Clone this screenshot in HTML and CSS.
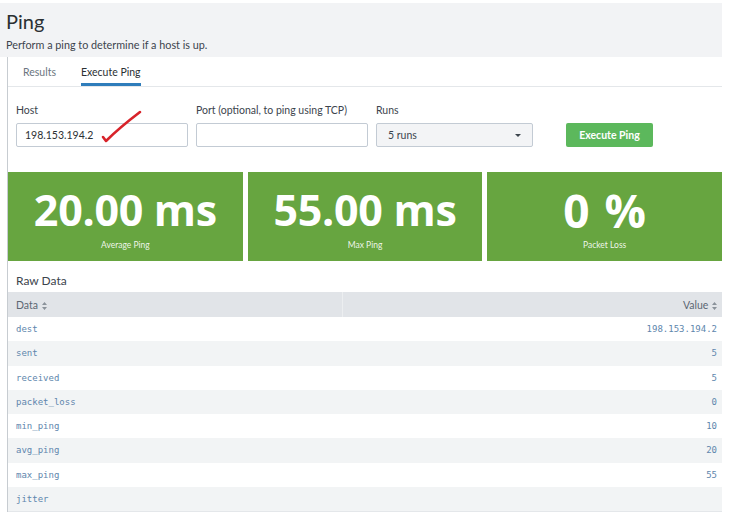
FILE: index.html
```html
<!DOCTYPE html>
<html>
<head>
<meta charset="utf-8">
<link rel="stylesheet" href="styles.css">
</head>
<body>
<div class="page">
  <div class="header">
    <h1 class="title">Ping</h1>
    <p class="subtitle">Perform a ping to determine if a host is up.</p>
  </div>
  <div class="panel">
    <div class="tabs">
      <div class="tab">Results</div>
      <div class="tab active">Execute Ping</div>
    </div>
    <div class="form">
      <div class="field host">
        <label class="label">Host</label>
        <div class="input">198.153.194.2</div>
        <svg class="check" width="44" height="36" viewBox="0 0 44 36">
          <path d="M3 27 L6 31 Q19 18 40 2" fill="none" stroke="#d8232a" stroke-width="2.6" stroke-linecap="round" stroke-linejoin="round"/>
        </svg>
      </div>
      <div class="field port">
        <label class="label">Port (optional, to ping using TCP)</label>
        <div class="input"></div>
      </div>
      <div class="field runs">
        <label class="label">Runs</label>
        <div class="select"><span>5 runs</span><span class="caret"></span></div>
      </div>
      <div class="field btnfield">
        <button class="btn">Execute Ping</button>
      </div>
    </div>
    <div class="stats">
      <div class="stat"><div class="value">20.00 ms</div><div class="caption">Average Ping</div></div>
      <div class="stat"><div class="value">55.00 ms</div><div class="caption">Max Ping</div></div>
      <div class="stat"><div class="value big">0 %</div><div class="caption">Packet Loss</div></div>
    </div>
    <div class="raw-title">Raw Data</div>
    <table class="table">
      <thead>
        <tr>
          <th class="c1">Data <svg class="sort" width="5" height="8" viewBox="0 0 5 8"><path d="M2.5 0 L5 3 L0 3 Z M2.5 8 L5 5 L0 5 Z" fill="#8a929a"/></svg></th>
          <th class="c2">Value <svg class="sort" width="5" height="8" viewBox="0 0 5 8"><path d="M2.5 0 L5 3 L0 3 Z M2.5 8 L5 5 L0 5 Z" fill="#8a929a"/></svg></th>
        </tr>
      </thead>
      <tbody>
        <tr><td>dest</td><td class="num">198.153.194.2</td></tr>
        <tr class="alt"><td>sent</td><td class="num">5</td></tr>
        <tr><td>received</td><td class="num">5</td></tr>
        <tr class="alt"><td>packet_loss</td><td class="num">0</td></tr>
        <tr><td>min_ping</td><td class="num">10</td></tr>
        <tr class="alt"><td>avg_ping</td><td class="num">20</td></tr>
        <tr><td>max_ping</td><td class="num">55</td></tr>
        <tr class="alt"><td>jitter</td><td class="num"></td></tr>
      </tbody>
    </table>
    <div class="tail"></div>
  </div>
</div>
</body>
</html>
```
FILE: styles.css
```css
* { box-sizing: border-box; }
html, body { margin: 0; padding: 0; background: #ffffff; }
body { font-family: Lato, "Open Sans", sans-serif; color: #3c444d; }
.page { width: 722px; padding-top: 3px; }
.header { background: #f2f3f5; padding: 6px 6px 0 6px; height: 54px; }
.title { margin: 0; font-size: 20px; font-weight: 400; line-height: 24px; color: #2b3033; }
.subtitle { margin: 5px 0 0 0; font-size: 10.8px; line-height: 14px; color: #3c444d; }
.panel { margin-left: 7px; border-left: 1px solid #c7ccd1; background: #fff; }
.tabs { display: flex; height: 30px; border-bottom: 1px solid #e4e7ea; padding-left: 15px; gap: 25px; }
.tab { font-size: 10.5px; line-height: 30px; color: #6b7580; }
.tab.active { color: #2b3033; box-shadow: inset 0 -3px 0 #2f7dbb; height: 29px; }
.form { display: flex; padding: 15px 0 0 8px; height: 85px; }
.field { position: relative; display: flex; flex-direction: column; margin-right: 8px; }
.label { font-size: 10.5px; line-height: 14px; height: 21px; color: #3c444d; padding-top: 1px; }
.input { width: 172px; height: 24px; border: 1px solid #c3cbd4; border-radius: 2px; font-size: 10.5px; line-height: 22px; padding-left: 8px; color: #2b3033; }
.check { position: absolute; left: 84px; top: 8px; }
.runs .select { width: 157px; height: 24px; border: 1px solid #c3cbd4; border-radius: 2px; background: #f3f4f6; font-size: 10.5px; line-height: 22px; padding: 0 0 0 11px; display: flex; justify-content: space-between; align-items: center; color: #3c444d; }
.caret { width: 0; height: 0; border-left: 3px solid transparent; border-right: 3px solid transparent; border-top: 3px solid #3c444d; margin-right: 11px; }
.btnfield { margin-left: 25px; padding-top: 21px; }
.btn { width: 87px; height: 24px; border: 0; border-radius: 2px; background: #5cb85c; color: #fff; font-family: Lato, sans-serif; font-weight: 700; font-size: 10.5px; padding: 0; }
.stats { display: flex; gap: 5px; height: 89px; width: 714px; }
.stat { flex: 1; background: #67a540; color: #fff; text-align: center; display: flex; flex-direction: column; align-items: center; }
.value { font-family: "Open Sans", sans-serif; font-weight: 700; font-size: 43px; line-height: 50px; margin-top: 13px; letter-spacing: -0.3px; }
.value.big { font-size: 46px; letter-spacing: 0; word-spacing: 3px; }
.caption { font-size: 8.5px; line-height: 12px; margin-top: 4px; color: rgba(255,255,255,0.9); }
.raw-title { font-size: 12px; line-height: 14px; padding: 13px 0 0 8px; height: 31px; color: #3c444d; }
.table { width: 714px; border-collapse: collapse; }
.table th { background: #e1e4e8; font-weight: 400; font-size: 10.5px; height: 25px; padding: 0 8px; color: #5c6773; }
.table th.c1 { text-align: left; width: 334px; border-right: 1px solid #eceef0; }
.table th.c2 { text-align: right; padding-right: 5px; }
.sort { vertical-align: -1px; margin-left: 1px; }
.table td { font-family: "DejaVu Sans Mono", monospace; font-size: 9px; color: #6086ad; height: 24.25px; padding: 0 8px; }
.table td.num { text-align: right; padding-right: 5px; }
.table tr.alt td { background: #f2f4f5; }
.tail { height: 1px; border-bottom: 1px solid #e4e7ea; width: 714px; }
```
